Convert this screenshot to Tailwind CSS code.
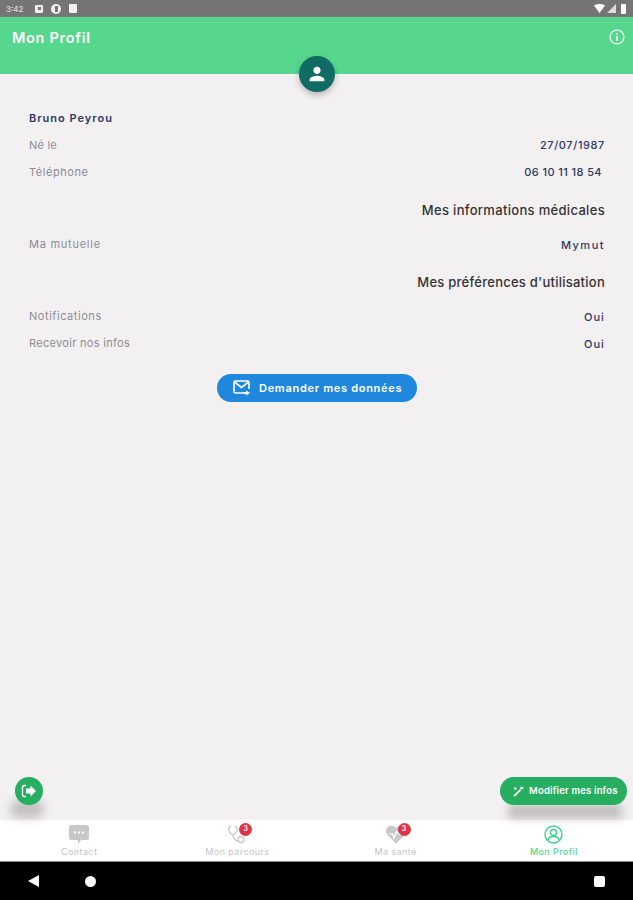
<!DOCTYPE html>
<html lang="fr">

<head>
  <meta charset="UTF-8" />
  <meta name="viewport" content="width=device-width, initial-scale=1.0" />
  <title>Mon Profil</title>
  <script src="https://cdn.jsdelivr.net/npm/@tailwindcss/browser@4"></script>
</head>

<body class="bg-[#f3f0f2] font-['Inter',sans-serif] overflow-hidden">
  <div class="relative w-[633px] h-[900px] flex flex-col">

    <!-- status bar -->
    <div class="h-[17px] bg-[#757575] flex items-center pl-[6px] pr-[7px] text-white">
      <span class="text-[8px] w-[29px] text-white/80">3:42</span>
      <div class="w-[8px] h-[8px] bg-white/90 rounded-[1px] mr-[8px] flex items-center justify-center">
        <div class="w-[3px] h-[3px] bg-[#757575]"></div>
      </div>
      <div class="w-[10px] h-[10px] bg-white/90 rounded-full mr-[8px] flex items-center justify-center">
        <div class="w-[3px] h-[6px] bg-[#757575]"></div>
      </div>
      <div class="w-[8px] h-[9px] bg-white/90 rounded-[1px]"></div>
      <div class="ml-auto flex items-center gap-[2px]">
        <svg class="w-[11px] h-[9px]" viewBox="0 0 11 9"><path fill="#fff" d="M0 1.500C3 -.500 8 -.500 11 1.500L5.500 9z" /></svg>
        <svg class="w-[9px] h-[9px]" viewBox="0 0 9 9"><path fill="#fff" fill-opacity=".75" d="M9 0v9H0z" /></svg>
        <div class="w-[5px] h-[10px] bg-white rounded-[1px] ml-[3px]"></div>
      </div>
    </div>

    <!-- header -->
    <header class="h-[57px] bg-[#57d68d] flex items-start justify-between pl-[12px] pr-[8px] pt-[12px]">
      <h1 class="text-[14.5px] leading-[18px] font-semibold text-white tracking-[0.7px]">Mon Profil</h1>
      <svg class="w-[16px] h-[16px]" fill="none" stroke="#fff" stroke-width="1.200" viewBox="0 0 16 16">
        <circle cx="8" cy="8" r="7" />
        <path stroke-width="1.600" d="M8 4v1.400M8 7v5" />
      </svg>
    </header>

    <!-- avatar -->
    <div class="absolute left-[299px] top-[56px] w-[36px] h-[36px] rounded-full bg-[#0f6b63] shadow-[0_3px_6px_rgba(0,0,0,0.25)] flex items-center justify-center">
      <svg class="w-[22px] h-[22px]" fill="#fff" viewBox="0 0 24 24">
        <path d="M12 12c2.200 0 4-1.800 4-4s-1.800-4-4-4-4 1.800-4 4 1.800 4 4 4zm0 2c-2.700 0-8 1.300-8 4v2h16v-2c0-2.700-5.300-4-8-4z" />
      </svg>
    </div>

    <!-- content -->
    <main class="flex-1 pl-[29px] pr-[28px] pt-[36px] text-[11px]">
      <div class="h-[17px] leading-[17px] font-semibold text-[#2b3a63] tracking-[1px]">Bruno Peyrou</div>

      <div class="mt-[10px] h-[17px] flex items-center justify-between">
        <span class="text-[#8c8c94] tracking-[0.2px]">Né le</span>
        <span class="font-medium text-[#2b3a63] tracking-[0.6px]">27/07/1987</span>
      </div>
      <div class="mt-[10px] h-[17px] flex items-center justify-between">
        <span class="text-[#8c8c94] tracking-[0.55px]">Téléphone</span>
        <span class="font-medium text-[#2b3a63] pr-[3px] tracking-[0.4px]">06 10 11 18 54</span>
      </div>

      <div class="mt-[21px] h-[17px] leading-[17px] text-right text-[13px] font-medium text-[#333] tracking-[0.32px]">Mes informations médicales</div>

      <div class="mt-[17px] h-[17px] flex items-center justify-between">
        <span class="text-[#8c8c94] tracking-[0.75px]">Ma mutuelle</span>
        <span class="font-medium text-[#2b3a63] tracking-[1.500px] translate-y-[1px]">Mymut</span>
      </div>

      <div class="mt-[21px] h-[17px] leading-[17px] text-right text-[13px] font-medium text-[#333] tracking-[0.25px]">Mes préférences d'utilisation</div>

      <div class="mt-[17px] h-[17px] flex items-center justify-between">
        <span class="text-[#8c8c94] tracking-[0.55px]">Notifications</span>
        <span class="font-medium text-[#2b3a63] tracking-[1.100px] translate-y-[1px]">Oui</span>
      </div>
      <div class="mt-[10px] h-[17px] flex items-center justify-between">
        <span class="text-[#8c8c94] tracking-[0.3px]">Recevoir nos infos</span>
        <span class="font-medium text-[#2b3a63] tracking-[1.100px] translate-y-[1px]">Oui</span>
      </div>

      <div class="mt-[22px] flex justify-center">
        <button class="w-[200px] h-[28px] rounded-full bg-[#1f88dc] text-white flex items-center pl-[16px] gap-[8px]">
          <svg class="w-[18px] h-[16px]" fill="none" stroke="#fff" stroke-width="1.600" viewBox="0 0 18 16">
            <path d="M11 13H2.500A1.500 1.500 0 0 1 1 11.500v-9A1.500 1.500 0 0 1 2.500 1h12A1.500 1.500 0 0 1 16 2.500V9" />
            <path d="M1.500 2l7 5.500 7-5.500" />
            <path fill="#fff" stroke="none" d="M13 10.500l4 2.500-4 2.500V14h-2v-2h2z" />
          </svg>
          <span class="text-[11px] font-semibold tracking-[0.7px] whitespace-nowrap">Demander mes données</span>
        </button>
      </div>
    </main>

    <!-- floating buttons -->
    <div class="absolute left-[10px] top-[800px] w-[34px] h-[18px] rounded-full bg-black/20 blur-[5px]"></div>
    <button class="absolute left-[15px] top-[777px] w-[28px] h-[28px] rounded-full bg-[#27ae60] flex items-center justify-center">
      <svg class="w-[16px] h-[14px]" viewBox="0 0 16 14">
        <path fill="none" stroke="#fff" stroke-width="1.400" d="M5 1.500H3A1.500 1.500 0 0 0 1.500 3v8A1.500 1.500 0 0 0 3 12.500h2" />
        <path fill="#fff" d="M9.500 1.500L15 7l-5.500 5.500V9.500H5v-5h4.500z" />
      </svg>
    </button>

    <div class="absolute left-[508px] top-[804px] w-[114px] h-[15px] bg-black/20 blur-[4px]"></div>
    <button class="absolute left-[500px] top-[777px] w-[127px] h-[28px] rounded-full bg-[#27ae60] text-white flex items-center pl-[13px] gap-[5px]">
      <svg class="w-[11px] h-[11px]" viewBox="0 0 11 11" fill="#fff">
        <path d="M0.500 9.500L7 3l1.200 1.200L1.700 10.700z" />
        <path d="M8 .500l3 1.500-2 1.500-2-1z" />
        <path d="M1 1.500h2.500v2H1z" />
      </svg>
      <span class="text-[9.500px] font-semibold whitespace-nowrap tracking-[0.17px]">Modifier mes infos</span>
    </button>

    <!-- bottom tabs -->
    <nav class="h-[41px] bg-white grid grid-cols-4 text-[9px] text-[#c4c4c4] tracking-[0.4px]">
      <div class="relative flex flex-col items-center pt-[5px]">
        <svg class="w-[20px] h-[19px]" viewBox="0 0 20 19">
          <path fill="#c8c8c8" d="M2 0h16a2 2 0 0 1 2 2v11a2 2 0 0 1-2 2h-6l-3 4v-4H2a2 2 0 0 1-2-2V2a2 2 0 0 1 2-2z" />
          <path fill="#fff" d="M5 6.500h2v2H5zM9 6.500h2v2H9zM13 6.500h2v2h-2z" />
        </svg>
        <span class="leading-[13px] mt-[1px]">Contact</span>
      </div>

      <div class="relative flex flex-col items-center pt-[5px]">
        <svg class="w-[20px] h-[19px]" fill="none" stroke="#c8c8c8" stroke-width="1.300" viewBox="0 0 20 19">
          <path d="M4 1.500C1.500 2 1 4 2 6c.8 1.800 2.500 3.500 4 4 1.500-.5 3-2.200 4-4 1-2 .5-4-2-4.500" />
          <path d="M6 10c.5 4 2.500 6 5.500 6" />
          <circle cx="14" cy="14.500" r="3" />
        </svg>
        <span class="leading-[13px] mt-[1px]">Mon parcours</span>
        <span class="absolute left-[81px] top-[3px] w-[13px] h-[13px] rounded-full bg-[#dc3545] text-white text-[7px] tracking-normal font-semibold flex items-center justify-center">3</span>
      </div>

      <div class="relative flex flex-col items-center pt-[5px]">
        <svg class="w-[20px] h-[19px]" viewBox="0 0 20 19">
          <path fill="#c8c8c8" d="M10 18.500L1.500 10C-.500 7.500-.500 4 2 2s5.500-1.500 8 1c2.500-2.500 5.500-3 8-1s2.500 5.500.500 8z" />
          <path fill="none" stroke="#fff" stroke-width="1.200" d="M3 9h3.500l1.500 4 2.500-7 1.500 3h5" />
        </svg>
        <span class="leading-[13px] mt-[1px]">Ma santé</span>
        <span class="absolute left-[81px] top-[3px] w-[13px] h-[13px] rounded-full bg-[#dc3545] text-white text-[7px] tracking-normal font-semibold flex items-center justify-center">3</span>
      </div>

      <div class="relative flex flex-col items-center pt-[5px] text-[#57d68d] font-medium">
        <svg class="w-[19px] h-[19px]" fill="none" stroke="#3ecf8e" stroke-width="1.400" viewBox="0 0 19 19">
          <circle cx="9.500" cy="9.500" r="8.500" />
          <circle cx="9.500" cy="7.500" r="3" />
          <path d="M4 15c.5-2.500 2.500-3.500 5.500-3.500s5 1 5.500 3.500" />
        </svg>
        <span class="leading-[13px] mt-[1px]">Mon Profil</span>
      </div>
    </nav>

    <!-- android nav -->
    <div class="h-[39px] bg-black border-t border-[#888] relative flex items-center">
      <svg class="absolute left-[28px] top-[13px] w-[11px] h-[12px]" viewBox="0 0 11 12"><path fill="#fff" d="M11 0v12L0 6z" /></svg>
      <div class="absolute left-[85px] top-[14px] w-[11px] h-[11px] rounded-full bg-white"></div>
      <div class="absolute left-[594px] top-[14px] w-[11px] h-[11px] rounded-[2px] bg-white"></div>
    </div>
  </div>
</body>

</html>
